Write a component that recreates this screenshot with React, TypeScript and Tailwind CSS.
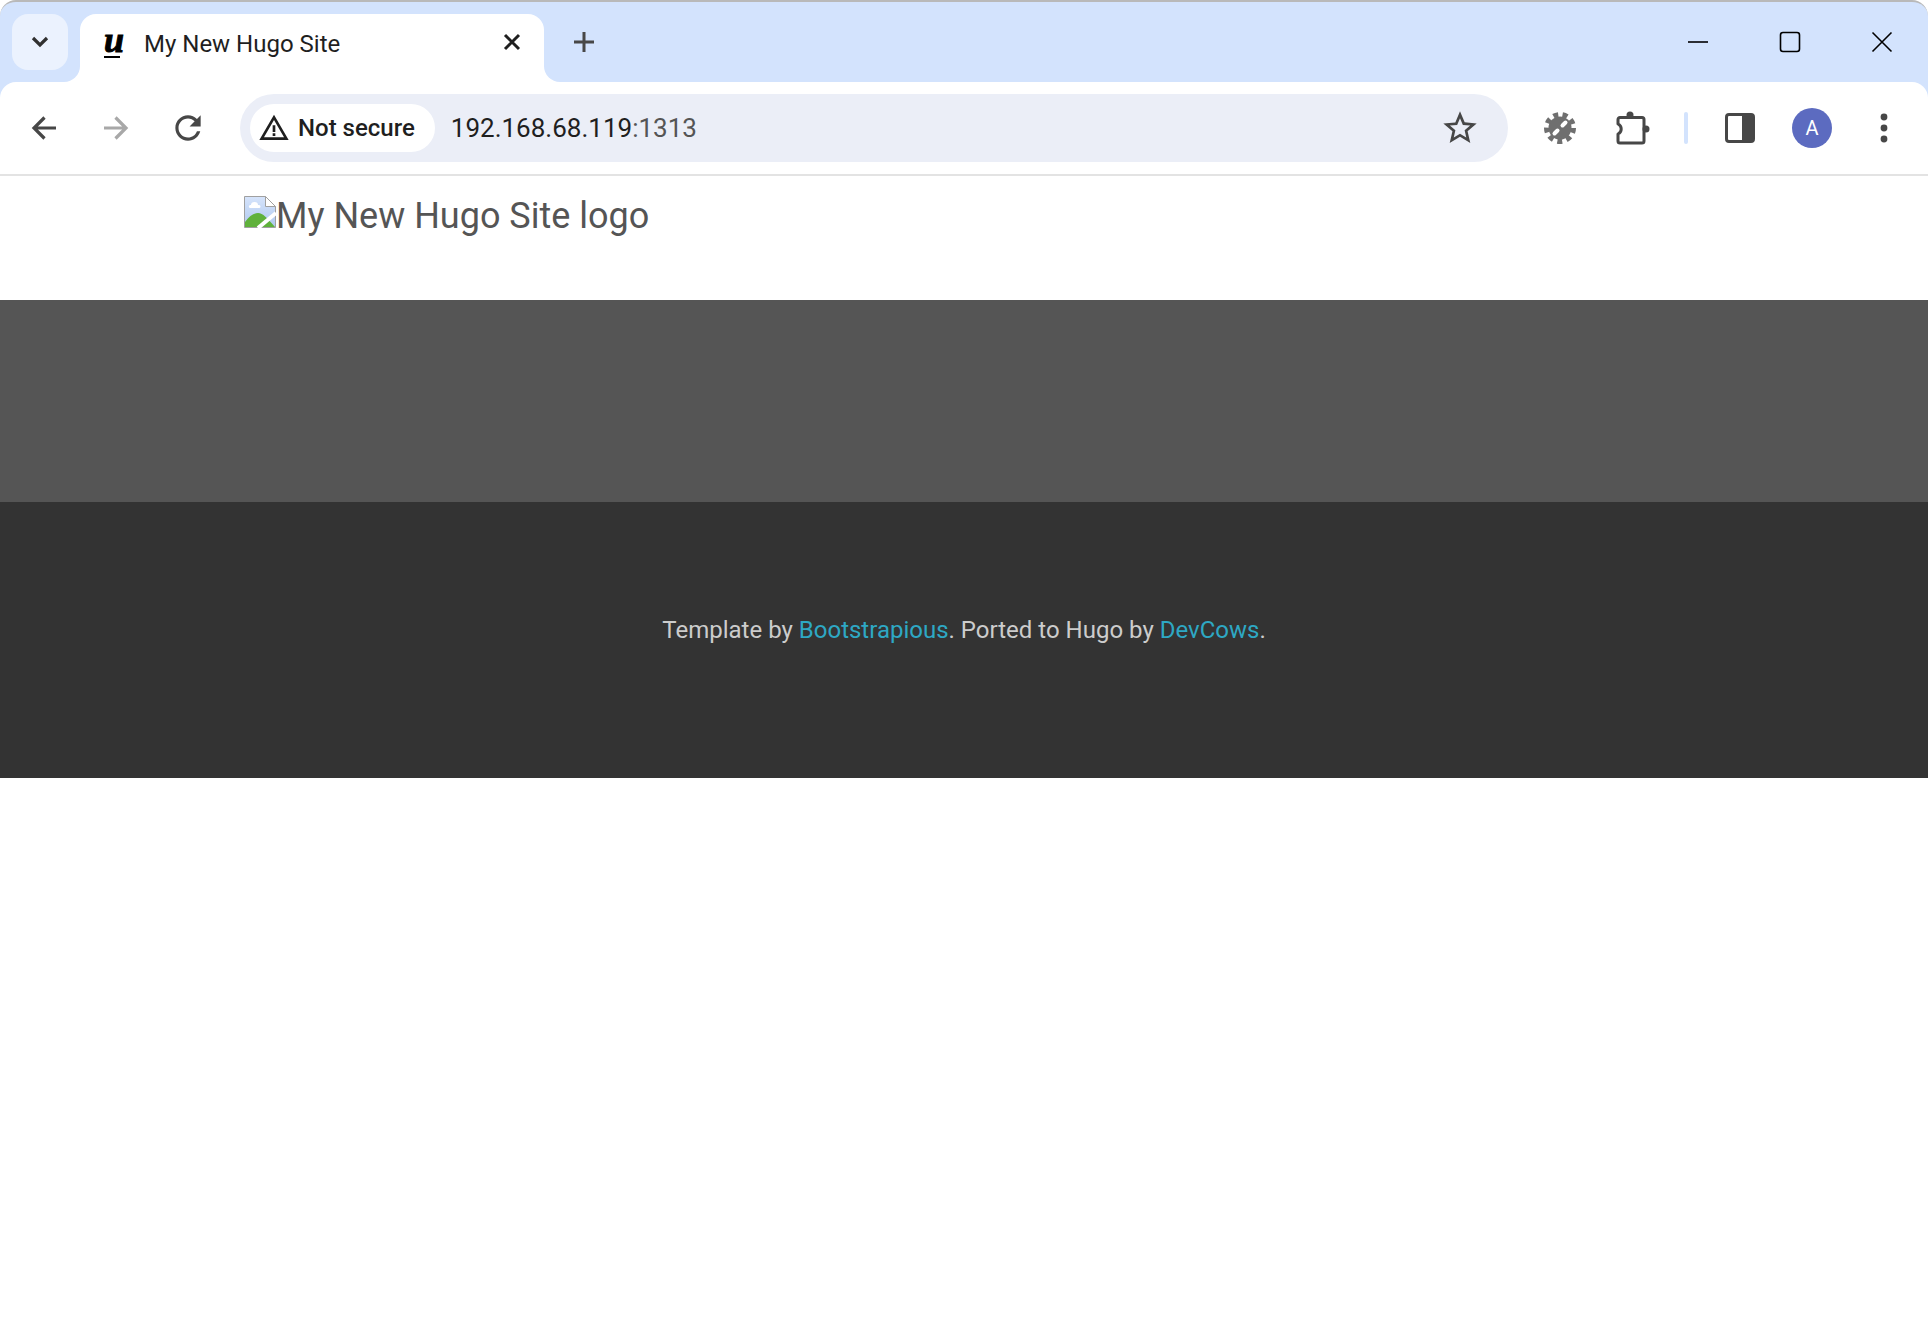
export default function App() {
  const ui = "font-['Roboto',sans-serif]";
  return (
    <div className="min-h-screen bg-white">
      <div className="rounded-t-2xl border-t-2 border-[#b9b9b9] bg-[#d3e3fd]">
        <div className="flex h-20 items-start pt-3 pl-3">
          <div className="flex h-14 w-14 items-center justify-center rounded-2xl bg-[#ebf2fe]">
            <svg width="20" height="14" viewBox="0 0 20 14" fill="none" stroke="#303030" strokeWidth="3.2">
              <path d="M3 3l7 7 7-7" />
            </svg>
          </div>
          <div className="relative ml-3 flex h-17 w-116 items-start rounded-t-2xl bg-white pt-3.5 pl-6">
            <div className="absolute bottom-0 -left-4 h-4 w-4 bg-white">
              <div className="h-4 w-4 rounded-br-2xl bg-[#d3e3fd]" />
            </div>
            <div className="absolute -right-4 bottom-0 h-4 w-4 bg-white">
              <div className="h-4 w-4 rounded-bl-2xl bg-[#d3e3fd]" />
            </div>
            <div className="flex w-10 flex-col items-start">
              <span className="font-['Liberation_Serif',serif] text-4xl/6 font-bold text-black italic [-webkit-text-stroke:1px_black]">u</span>
              <span className="mt-1 h-0.5 w-4 bg-black" />
            </div>
            <span className={`${ui} text-2xl/8 text-[#1f1f1f]`}>My New Hugo Site</span>
            <svg className="absolute top-4.5 right-5.5" width="20" height="20" viewBox="0 0 20 20" fill="none" stroke="#1f1f1f" strokeWidth="3">
              <path d="M3 3l14 14M17 3L3 17" />
            </svg>
          </div>
          <div className="ml-3 flex h-14 w-14 items-center justify-center">
            <svg width="22" height="22" viewBox="0 0 22 22" fill="none" stroke="#474747" strokeWidth="3">
              <path d="M11 1v20M1 11h20" />
            </svg>
          </div>
          <div className="ml-auto flex h-14 items-center gap-9 pr-4.5">
            <div className="flex w-14 justify-center">
              <svg width="22" height="22" viewBox="0 0 22 22" fill="none" stroke="#000" strokeWidth="1.6">
                <path d="M1 11h20" />
              </svg>
            </div>
            <div className="flex w-14 justify-center">
              <svg width="22" height="22" viewBox="0 0 22 22" fill="none" stroke="#000" strokeWidth="1.6">
                <rect x="1.5" y="1.5" width="19" height="19" rx="2.5" />
              </svg>
            </div>
            <div className="flex w-14 justify-center">
              <svg width="22" height="22" viewBox="0 0 22 22" fill="none" stroke="#000" strokeWidth="1.6">
                <path d="M1.5 1.5l19 19M20.5 1.5l-19 19" />
              </svg>
            </div>
          </div>
        </div>
        <div className="flex h-23 items-center rounded-t-2xl bg-white px-4">
          <div className="flex items-center gap-4">
            <div className="flex h-14 w-14 items-center justify-center">
              <svg width="28" height="28" viewBox="0 0 28 28" fill="none" stroke="#474747" strokeWidth="3.2">
                <path d="M26 14H4M14.5 3.5L4 14l10.5 10.5" />
              </svg>
            </div>
            <div className="flex h-14 w-14 items-center justify-center">
              <svg width="28" height="28" viewBox="0 0 28 28" fill="none" stroke="#a8a8a8" strokeWidth="3.2">
                <path d="M2 14h22M13.5 3.5L24 14 13.5 24.5" />
              </svg>
            </div>
            <div className="flex h-14 w-14 items-center justify-center">
              <svg width="38" height="38" viewBox="0 0 24 24" fill="#474747">
                <path d="M17.65 6.35C16.2 4.9 14.21 4 12 4c-4.42 0-7.99 3.58-7.99 8s3.57 8 7.99 8c3.73 0 6.84-2.55 7.73-6h-2.08c-.82 2.33-3.04 4-5.65 4-3.31 0-6-2.69-6-6s2.69-6 6-6c1.66 0 3.14.69 4.22 1.78L13 11h7V4l-2.35 2.35z" />
              </svg>
            </div>
          </div>
          <div className="ml-6 flex h-17 flex-1 items-center rounded-full bg-[#ebeef7] pr-7 pl-2.5">
            <div className="flex h-12 items-center gap-2 rounded-full bg-white pr-5 pl-2">
              <svg width="32" height="32" viewBox="0 0 24 24" fill="#1f1f1f">
                <path d="M12 5.99L19.53 19H4.47L12 5.99M12 2L1 21h22L12 2zm1 14h-2v2h2v-2zm0-6h-2v5h2v-5z" />
              </svg>
              <span className={`${ui} text-2xl/8 font-medium text-[#1f1f1f]`}>Not secure</span>
            </div>
            <span className={`${ui} ml-4 flex-1 text-[26px] text-[#1f1f1f]`}>
              192.168.68.119<span className="text-[#555555]">:1313</span>
            </span>
            <svg width="40" height="40" viewBox="0 0 24 24" fill="#474747">
              <path d="M22 9.24l-7.19-.62L12 2 9.19 8.63 2 9.24l5.46 4.73L5.82 21 12 17.27 18.18 21l-1.63-7.03L22 9.24zM12 15.4l-3.76 2.27 1-4.28-3.32-2.88 4.38-.38L12 6.1l1.71 4.04 4.38.38-3.32 2.88 1 4.28L12 15.4z" />
            </svg>
          </div>
          <div className="ml-6 flex items-center gap-4">
            <div className="flex h-14 w-14 items-center justify-center">
              <svg className="blur-[0.6px]" width="36" height="36" viewBox="0 0 36 36">
                <circle cx="18" cy="18" r="11.5" fill="#6f6f6f" />
                <circle cx="18" cy="18" r="13.5" fill="none" stroke="#6f6f6f" strokeWidth="5" strokeDasharray="5 4.4" />
                <path d="M12.5 23.5l3-3M20.5 15.5l3-3" stroke="#ffffff" strokeWidth="4" strokeLinecap="round" />
              </svg>
            </div>
            <div className="flex h-14 w-14 items-center justify-center">
              <svg width="36" height="36" viewBox="0 0 36 36" fill="none" stroke="#474747" strokeWidth="3">
                <path d="M6 7.5h22a2 2 0 0 1 2 2V31a2 2 0 0 1-2 2H6a2 2 0 0 1-2-2v-7a5.5 5.5 0 0 0 0-10V9.5a2 2 0 0 1 2-2z" strokeLinejoin="round" />
                <circle cx="16" cy="5" r="3.5" fill="#474747" stroke="none" />
                <circle cx="32" cy="19" r="3.5" fill="#474747" stroke="none" />
              </svg>
            </div>
          </div>
          <div className="mx-6 h-8 w-1 rounded-full bg-[#d3e3fd]" />
          <div className="flex items-center gap-4">
            <div className="flex h-14 w-14 items-center justify-center">
              <svg width="30" height="30" viewBox="0 0 30 30">
                <rect x="1.5" y="1.5" width="27" height="27" rx="2.5" fill="#fff" stroke="#474747" strokeWidth="3" />
                <path d="M17 1.5h9a2.5 2.5 0 0 1 2.5 2.5v22a2.5 2.5 0 0 1-2.5 2.5h-9z" fill="#474747" />
              </svg>
            </div>
            <div className="flex h-14 w-14 items-center justify-center">
              <div className={`${ui} flex h-10 w-10 items-center justify-center rounded-full bg-[#5c6bc0] text-xl text-white`}>A</div>
            </div>
            <div className="flex h-14 w-14 items-center justify-center">
              <svg width="8" height="30" viewBox="0 0 8 30" fill="#474747">
                <circle cx="4" cy="4" r="3.4" />
                <circle cx="4" cy="15" r="3.4" />
                <circle cx="4" cy="26" r="3.4" />
              </svg>
            </div>
          </div>
        </div>
      </div>
      <div className="h-0.5 bg-[#e3e3e3]" />
      <div className="h-31 bg-white pt-5 font-['Roboto',sans-serif]">
        <div className="mx-auto max-w-360">
          <div className="text-4xl/10 text-[#555555]">
            <svg className="inline-block align-top" width="32" height="32" viewBox="0 0 32 32">
              <defs>
                <linearGradient id="sky" x1="0" y1="0" x2="0" y2="1">
                  <stop offset="0" stopColor="#d6e4fb" />
                  <stop offset="1" stopColor="#aec8ef" />
                </linearGradient>
              </defs>
              <path d="M0.5 0.5H21.5L31.5 10.5V31.5H0.5z" fill="url(#sky)" stroke="#a0a0a0" />
              <path d="M21.5 0.5V10.5H31.5z" fill="#fff" stroke="#a0a0a0" />
              <path d="M7 9a3.5 3 0 0 1 7 0h1a1.5 1.5 0 0 1 0 3H6a1.5 1.5 0 0 1 1-3z" fill="#fff" />
              <path d="M1 31V26C5 20 10 17 14 17c5 0 9 5 17 14z" fill="#5fb13b" />
              <path d="M14 32L32 17" stroke="#fff" strokeWidth="4" />
            </svg>
            My New Hugo Site logo
          </div>
        </div>
      </div>
      <div className="h-50.5 bg-[#555555]" />
      <div className="flex h-69 justify-center bg-[#333333] pt-27 font-['Roboto',sans-serif] text-2xl/10 text-[#cccccc]">
        <p>
          Template by <a className="text-[#2ea8c4]">Bootstrapious</a>. Ported to Hugo by <a className="text-[#2ea8c4]">DevCows</a>.
        </p>
      </div>
    </div>
  );
}
